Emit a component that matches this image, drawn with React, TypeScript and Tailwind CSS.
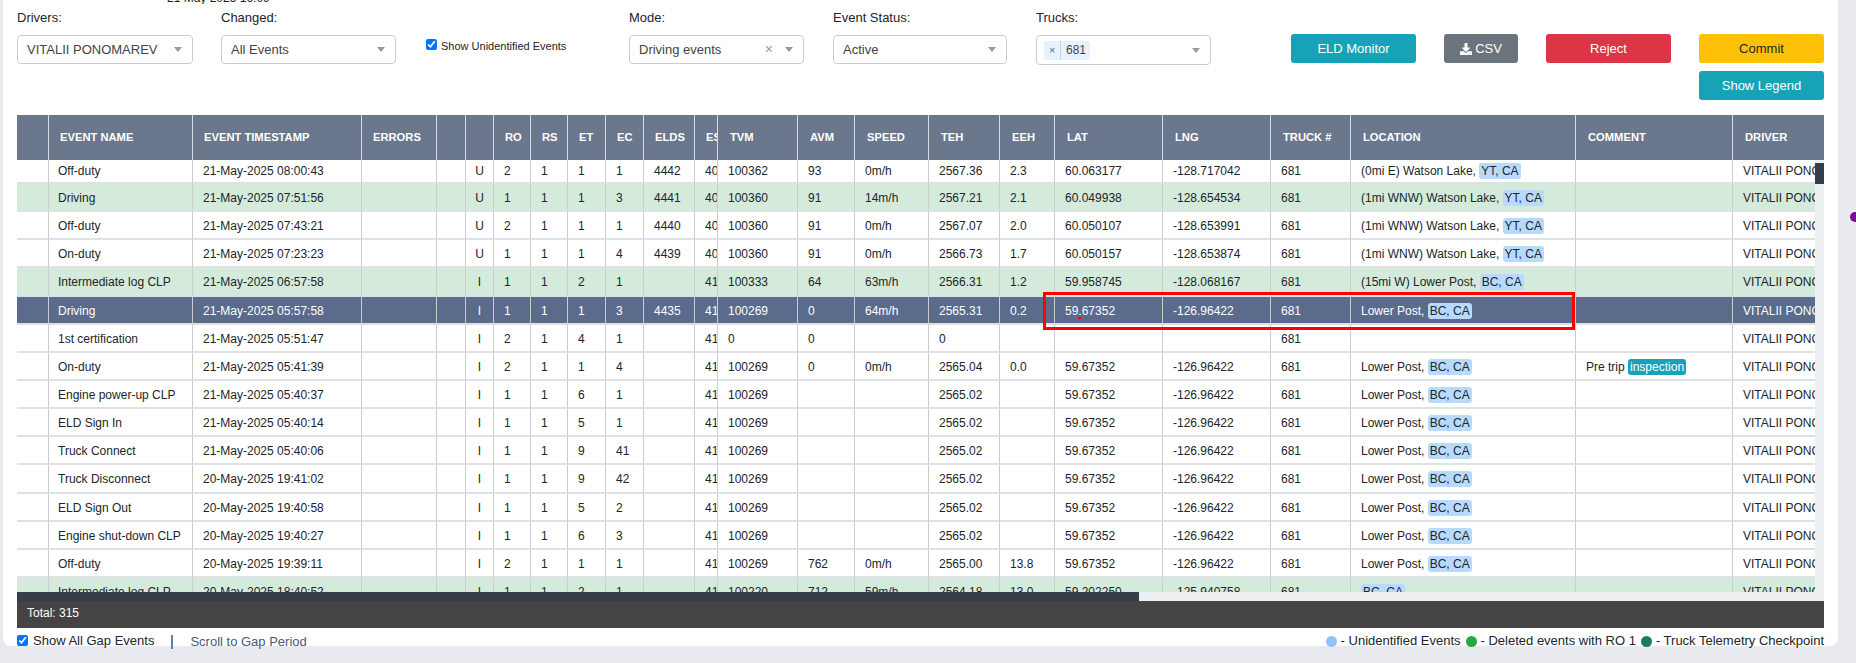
import React from "react";
import { FaDownload } from "react-icons/fa";

const colClasses = [
  "w-[32px]", "w-[144px]", "w-[169px]", "w-[75px]", "w-[29px]", "w-[28px]", "w-[37px]", "w-[37px]",
  "w-[38px]", "w-[38px]", "w-[51px]", "w-[23px]", "w-[80px]", "w-[57px]", "w-[74px]", "w-[71px]",
  "w-[55px]", "w-[108px]", "w-[108px]", "w-[80px]", "w-[225px]", "w-[157px]", "w-[91px]",
];

const headers = [
  "", "EVENT NAME", "EVENT TIMESTAMP", "ERRORS", "", "", "RO", "RS", "ET", "EC", "ELDS", "ES", "TVM",
  "AVM", "SPEED", "TEH", "EEH", "LAT", "LNG", "TRUCK #", "LOCATION", "COMMENT", "DRIVER",
];

type Kind = "plain" | "green" | "selected";

interface EventRow {
  name: string;
  time: string;
  flag: string;
  codes: string[];
  elds?: string;
  es: string;
  tvm: string;
  avm?: string;
  speed?: string;
  teh: string;
  eeh?: string;
  lat?: string;
  lng?: string;
  place?: string;
  region?: string;
  comment?: boolean;
  kind?: Kind;
}

const LP = { lat: "59.67352", lng: "-126.96422", place: "Lower Post, ", region: "BC, CA" };

const rows: EventRow[] = [
  { name: "Off-duty", time: "21-May-2025 08:00:43", flag: "U", codes: ["2", "1", "1", "1"], elds: "4442", es: "40", tvm: "100362", avm: "93", speed: "0m/h", teh: "2567.36", eeh: "2.3", lat: "60.063177", lng: "-128.717042", place: "(0mi E) Watson Lake, ", region: "YT, CA" },
  { name: "Driving", time: "21-May-2025 07:51:56", flag: "U", codes: ["1", "1", "1", "3"], elds: "4441", es: "40", tvm: "100360", avm: "91", speed: "14m/h", teh: "2567.21", eeh: "2.1", lat: "60.049938", lng: "-128.654534", place: "(1mi WNW) Watson Lake, ", region: "YT, CA", kind: "green" },
  { name: "Off-duty", time: "21-May-2025 07:43:21", flag: "U", codes: ["2", "1", "1", "1"], elds: "4440", es: "40", tvm: "100360", avm: "91", speed: "0m/h", teh: "2567.07", eeh: "2.0", lat: "60.050107", lng: "-128.653991", place: "(1mi WNW) Watson Lake, ", region: "YT, CA" },
  { name: "On-duty", time: "21-May-2025 07:23:23", flag: "U", codes: ["1", "1", "1", "4"], elds: "4439", es: "40", tvm: "100360", avm: "91", speed: "0m/h", teh: "2566.73", eeh: "1.7", lat: "60.050157", lng: "-128.653874", place: "(1mi WNW) Watson Lake, ", region: "YT, CA" },
  { name: "Intermediate log CLP", time: "21-May-2025 06:57:58", flag: "I", codes: ["1", "1", "2", "1"], es: "41", tvm: "100333", avm: "64", speed: "63m/h", teh: "2566.31", eeh: "1.2", lat: "59.958745", lng: "-128.068167", place: "(15mi W) Lower Post, ", region: "BC, CA", kind: "green" },
  { name: "Driving", time: "21-May-2025 05:57:58", flag: "I", codes: ["1", "1", "1", "3"], elds: "4435", es: "41", tvm: "100269", avm: "0", speed: "64m/h", teh: "2565.31", eeh: "0.2", ...LP, kind: "selected" },
  { name: "1st certification", time: "21-May-2025 05:51:47", flag: "I", codes: ["2", "1", "4", "1"], es: "41", tvm: "0", avm: "0", teh: "0" },
  { name: "On-duty", time: "21-May-2025 05:41:39", flag: "I", codes: ["2", "1", "1", "4"], es: "41", tvm: "100269", avm: "0", speed: "0m/h", teh: "2565.04", eeh: "0.0", ...LP, comment: true },
  { name: "Engine power-up CLP", time: "21-May-2025 05:40:37", flag: "I", codes: ["1", "1", "6", "1"], es: "41", tvm: "100269", teh: "2565.02", ...LP },
  { name: "ELD Sign In", time: "21-May-2025 05:40:14", flag: "I", codes: ["1", "1", "5", "1"], es: "41", tvm: "100269", teh: "2565.02", ...LP },
  { name: "Truck Connect", time: "21-May-2025 05:40:06", flag: "I", codes: ["1", "1", "9", "41"], es: "41", tvm: "100269", teh: "2565.02", ...LP },
  { name: "Truck Disconnect", time: "20-May-2025 19:41:02", flag: "I", codes: ["1", "1", "9", "42"], es: "41", tvm: "100269", teh: "2565.02", ...LP },
  { name: "ELD Sign Out", time: "20-May-2025 19:40:58", flag: "I", codes: ["1", "1", "5", "2"], es: "41", tvm: "100269", teh: "2565.02", ...LP },
  { name: "Engine shut-down CLP", time: "20-May-2025 19:40:27", flag: "I", codes: ["1", "1", "6", "3"], es: "41", tvm: "100269", teh: "2565.02", ...LP },
  { name: "Off-duty", time: "20-May-2025 19:39:11", flag: "I", codes: ["2", "1", "1", "1"], es: "41", tvm: "100269", avm: "762", speed: "0m/h", teh: "2565.00", eeh: "13.8", ...LP },
  { name: "Intermediate log CLP", time: "20-May-2025 18:40:52", flag: "I", codes: ["1", "1", "2", "1"], es: "41", tvm: "100220", avm: "712", speed: "59m/h", teh: "2564.18", eeh: "13.0", lat: "59.202250", lng: "-125.940758", place: "", region: "BC, CA", kind: "green" },
];

const rowClass: Record<Kind, string> = {
  plain: "bg-white text-[#212529]",
  green: "bg-[#d4ebdb] text-[#212529]",
  selected: "bg-[#5a6b8c] text-white",
};

function Cols() {
  return (
    <colgroup>
      {colClasses.map((c, i) => (
        <col key={i} className={c} />
      ))}
    </colgroup>
  );
}

function Caret() {
  return <span className="h-0 w-0 border-x-[4px] border-t-[5px] border-x-transparent border-t-[#999]" />;
}

function Select({ label, value, width, clear }: { label: string; value: string; width: string; clear?: boolean }) {
  return (
    <div className={width}>
      <div className="mt-[6px] h-[16px] text-[13px] leading-[16px] text-[#212529]">{label}</div>
      <div className="mt-[9px] flex h-[29px] items-center rounded-[4px] border border-[#ccc] bg-white pl-[9px] pr-[10px] text-[13px] text-[#444]">
        <span className="flex-1 whitespace-nowrap">{value}</span>
        {clear && <span className="mr-[12px] text-[14px] text-[#999]">×</span>}
        <Caret />
      </div>
    </div>
  );
}

function ActionButton({ children, className }: { children: React.ReactNode; className: string }) {
  return (
    <button className={`flex h-[29px] items-center justify-center rounded-[3px] text-[13px] ${className}`}>
      {children}
    </button>
  );
}

function Cell({ children, last, center, tight }: { children?: React.ReactNode; last?: boolean; center?: boolean; tight?: boolean }) {
  return (
    <td
      className={`overflow-hidden whitespace-nowrap border-b-2 border-b-[#dfe2e5] ${
        last ? "" : "border-r border-r-[#ccc]"
      } ${center ? "text-center" : tight ? "pl-[9px]" : "pl-[10px]"} p-0 text-[12px]`}
    >
      {children}
    </td>
  );
}

function Region({ text }: { text: string }) {
  return <span className="rounded-[3px] bg-[#b8daff] px-[2px] py-[1px] text-[#212529]">{text}</span>;
}

function BodyRow({ row, first }: { row: EventRow; first: boolean }) {
  return (
    <tr className={`${first ? "h-[24px]" : "h-[28.15px] [&>td]:pt-[2px]"} ${rowClass[row.kind ?? "plain"]}`}>
      <Cell />
      <Cell tight>{row.name}</Cell>
      <Cell>{row.time}</Cell>
      <Cell />
      <Cell />
      <Cell center>{row.flag}</Cell>
      {row.codes.map((c, i) => (
        <Cell key={i}>{c}</Cell>
      ))}
      <Cell>{row.elds}</Cell>
      <Cell>{row.es}</Cell>
      <Cell>{row.tvm}</Cell>
      <Cell>{row.avm}</Cell>
      <Cell>{row.speed}</Cell>
      <Cell>{row.teh}</Cell>
      <Cell>{row.eeh}</Cell>
      <Cell>{row.lat}</Cell>
      <Cell>{row.lng}</Cell>
      <Cell>681</Cell>
      <Cell>
        {row.place}
        {row.region && <Region text={row.region} />}
      </Cell>
      <Cell>
        {row.comment && (
          <>
            Pre trip{" "}
            <span className="rounded-[3px] bg-[#17a2b8] px-[2px] py-[1px] text-white">inspection</span>
          </>
        )}
      </Cell>
      <Cell last>VITALII PONOMAREV</Cell>
    </tr>
  );
}

function LegendDot({ className }: { className: string }) {
  return <span className={`inline-block h-[11px] w-[11px] rounded-full ${className}`} />;
}

export default function App() {
  return (
    <div className="relative h-[663px] overflow-hidden bg-[#e9eaf0] font-['Liberation_Sans',Arial,sans-serif]">
      <div className="ml-[3px] h-[646px] w-[1835px] rounded-b-[8px] bg-white pl-[14px]">
        <div className="h-[4px] overflow-hidden">
          <div className="ml-[150px] -mt-[9px] text-[12px] leading-[14px] text-[#212529]">21 May 2025 16:09</div>
        </div>

        <div className="flex h-[111px]">
          <Select label="Drivers:" value="VITALII PONOMAREV" width="w-[176px]" />
          <div className="ml-[28px]">
            <Select label="Changed:" value="All Events" width="w-[175px]" />
          </div>
          <label className="ml-[30px] mt-[34px] flex h-[12px] w-[203px] items-center gap-[4px] text-[11px] text-[#212529]">
            <input type="checkbox" defaultChecked className="m-0 h-[11px] w-[11px]" />
            <span className="translate-y-[2px]">Show Unidentified Events</span>
          </label>
          <Select label="Mode:" value="Driving events" width="w-[175px]" clear />
          <div className="ml-[29px]">
            <Select label="Event Status:" value="Active" width="w-[174px]" />
          </div>
          <div className="ml-[29px] w-[175px]">
            <div className="mt-[6px] h-[16px] text-[13px] leading-[16px] text-[#212529]">Trucks:</div>
            <div className="mt-[9px] flex h-[30px] items-center rounded-[4px] border border-[#ccc] bg-white pl-[7px] pr-[10px]">
              <div className="flex h-[19px] w-[46px] items-center rounded-[2px] bg-[#e6f2ff] text-[12px] text-[#444]">
                <span className="w-[9px] pl-[5px] text-[11px] text-[#666]">×</span>
                <span className="ml-[7px] h-full border-l border-[#b9d6f5] pl-[5px] leading-[19px]">681</span>
              </div>
              <span className="flex-1" />
              <Caret />
            </div>
          </div>
          <div className="ml-[80px] mt-[30px] flex h-[29px] gap-[28px]">
            <ActionButton className="w-[125px] bg-[#17a2b8] text-white">ELD Monitor</ActionButton>
            <ActionButton className="w-[74px] gap-[3px] bg-[#6c757d] text-white">
              <FaDownload className="h-[12px] w-[12px]" /> CSV
            </ActionButton>
            <ActionButton className="w-[125px] bg-[#dc3545] text-white">Reject</ActionButton>
            <div className="flex w-[125px] flex-col gap-[8px]">
              <ActionButton className="w-full shrink-0 bg-[#ffc107] text-[#212529]">Commit</ActionButton>
              <ActionButton className="w-full shrink-0 bg-[#17a2b8] text-white">Show Legend</ActionButton>
            </div>
          </div>
        </div>

        <div className="w-[1807px]">
          <table className="w-[1807px] table-fixed border-separate border-spacing-0">
            <Cols />
            <thead>
              <tr className="h-[45px] bg-[#6b778d]">
                {headers.map((h, i) => (
                  <th
                    key={i}
                    className={`overflow-hidden whitespace-nowrap p-0 ${
                      i < 12 ? "pl-[11px]" : "pl-[12px]"
                    } text-left text-[11.2px] font-bold text-white ${
                      i < headers.length - 1 ? "border-r border-r-[#d8dce2]" : ""
                    }`}
                  >
                    {h}
                  </th>
                ))}
              </tr>
            </thead>
          </table>

          <div className="flex h-[432px]">
            <div className="w-[1798px] overflow-hidden">
              <table className="w-[1807px] table-fixed border-separate border-spacing-0">
                <Cols />
                <tbody>
                  {rows.map((row, i) => (
                    <BodyRow key={i} row={row} first={i === 0} />
                  ))}
                </tbody>
              </table>
            </div>
            <div className="w-[9px] bg-[#edf0f2]">
              <div className="mt-[3px] h-[21px] bg-[#373d49]" />
            </div>
          </div>

          <div className="h-[9px] bg-[#edf0f2]">
            <div className="h-full w-[1122px] bg-[#373d49]" />
          </div>
          <div className="flex h-[27px] items-center bg-[#444] pb-[4px] pl-[10px] text-[12px] text-white">Total: 315</div>

          <div className="flex h-[26px] items-center text-[13px] text-[#212529]">
            <input type="checkbox" defaultChecked className="m-0 h-[11px] w-[11px] -translate-y-[1px]" />
            <span className="ml-[5px]">Show All Gap Events</span>
            <span className="ml-[17px] h-[14px] w-[2px] translate-y-[1px] bg-[#5b7fa6]" />
            <span className="ml-[17px] translate-y-[1px] text-[#4a5a78]">Scroll to Gap Period</span>
            <span className="flex-1" />
            <span className="flex items-center gap-[4px] whitespace-nowrap text-[13px]">
              <LegendDot className="bg-[#90c2ff]" /> - Unidentified Events
              <LegendDot className="ml-[1px] bg-[#28a745]" /> - Deleted events with RO 1
              <LegendDot className="ml-[1px] bg-[#1b7a63]" /> - Truck Telemetry Checkpoint
            </span>
          </div>
        </div>
      </div>

      {/* annotation drawn over the table */}
      <div className="absolute left-[1043px] top-[292px] h-[38px] w-[532px] border-[3px] border-[#f00]" />
      <div className="absolute left-[1078px] top-[317px] h-[2px] w-[3px] bg-[#f00]" />
      <div className="absolute left-[1850px] top-[212px] h-[10px] w-[10px] rounded-full bg-[#7b0a9c]" />
    </div>
  );
}
